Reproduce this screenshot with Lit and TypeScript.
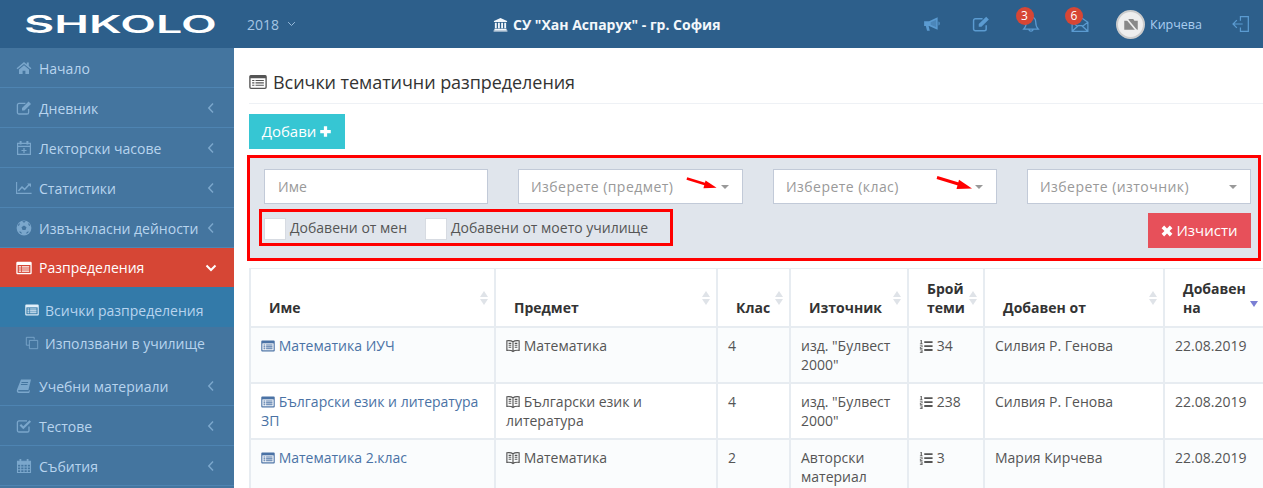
import { LitElement, html, css, svg } from "lit"
import { customElement } from "lit/decorators.js"

// inline icons, all on a 16x16 box, coloured through currentColor
const icons: Record<string, ReturnType<typeof svg>> = {
  home: svg`<path fill="currentColor" d="M8 2 .6 8.200l.9 1L8 3.900l6.500 5.300.9-1-2.600-2.200V2.600h-2v2z"/><path fill="currentColor" d="M3 9.400 8 5.300l5 4.100V14H9.400v-3.200H6.600V14H3z"/>`,
  edit: svg`<path fill="none" stroke="currentColor" stroke-width="1.300" d="M12.600 9v3.400a1.600 1.600 0 0 1-1.600 1.600H3a1.600 1.600 0 0 1-1.600-1.600V5A1.600 1.600 0 0 1 3 3.400h6.400"/><path fill="currentColor" d="M6 8 12.600 1.500l2.400 2.400L8.400 10.500 6 10.500z"/>`,
  calplus: svg`<path fill="none" stroke="currentColor" stroke-width="1.200" d="M1.600 3.400h12.800v11H1.600zM1.600 6.400h12.800M8 8v5M5.500 10.500h5"/><path fill="currentColor" d="M3.600 1h2v3.400h-2zM10.400 1h2v3.400h-2z"/>`,
  chart: svg`<path fill="none" stroke="currentColor" stroke-width="1.100" d="M.6 2v11.400h15"/><path fill="none" stroke="currentColor" stroke-width="1.500" d="M2.400 11 6 7l2.600 2.400 4.600-5"/><path fill="currentColor" d="M11.200 3.400H15v3.800z"/>`,
  ball: svg`<circle cx="8" cy="8" r="7.400" fill="currentColor"/><path fill="var(--cut,#44759f)" d="M8 5.400l2.500 1.800-1 2.900h-3l-1-2.900zM6.200 1.500 8 2.700l1.800-1.200-1.800-.5zM1.800 6.200l1.700-1.300.3-1.900-1.600 1.400zM14.200 6.200l-1.700-1.300-.3-1.900 1.600 1.400zM3 11.400l2 .4 1.100 1.900-2-.6zM13 11.400l-2 .4-1.100 1.900 2-.6z"/>`,
  listalt: svg`<rect x=".3" y="1.800" width="15.400" height="12.400" rx="1.200" fill="currentColor"/><path fill="var(--cut,#fff)" d="M1.600 5h12.800v7.900H1.600z"/><path fill="currentColor" d="M2.800 6.200h2.200v1.200H2.800zM2.800 8.400h2.200v1.200H2.800zM2.800 10.600h2.200v1.200H2.800zM5.800 6.200h7.400v1.200H5.800zM5.800 8.400h7.400v1.200H5.800zM5.800 10.600h7.400v1.200H5.800z"/>`,
  listline: svg`<rect x=".8" y="2.300" width="14.400" height="11.400" rx="1" fill="none" stroke="currentColor" stroke-width="1.200"/><path fill="currentColor" d="M.8 2.300h14.400v2.400H.8zM2.800 6.200h2v1h-2zM2.800 8.300h2v1h-2zM2.800 10.400h2v1h-2zM5.800 6.200h7.400v1H5.800zM5.800 8.300h7.400v1H5.800zM5.800 10.400h7.400v1H5.800z"/>`,
  book: svg`<path fill="currentColor" d="M5 1.500h10l-2.600 10.500H2.800c-.9 0-.9 1.500 0 1.500h9.800l.4-1.200 1 .3-.8 2.400H2.400C.8 15 .5 13.200 1 11.600z"/><path fill="var(--cut,#44759f)" d="M5.600 4h6.600l-.2.900H5.400zM5 6h6.600l-.2.900H4.800z"/>`,
  check: svg`<path fill="none" stroke="currentColor" stroke-width="1.300" d="M13 8.500v3.900a1.600 1.600 0 0 1-1.600 1.600H3a1.600 1.600 0 0 1-1.600-1.600V4.500A1.600 1.600 0 0 1 3 2.900h8"/><path fill="none" stroke="currentColor" stroke-width="2.200" d="m4.300 6.800 3 3L14.300 3"/>`,
  cal: svg`<path fill="none" stroke="currentColor" stroke-width="1.100" d="M1.500 3.200h13v11.300h-13zM1.500 6.300h13M1.500 9h13M1.500 11.800h13M4.700 6.300v8.200M8 6.300v8.200M11.300 6.300v8.200"/><path fill="currentColor" d="M3.500 1h1.800v3.400H3.500zM10.700 1h1.800v3.400h-1.800zM1.500 3.200h13v3h-13z"/>`,
  files: svg`<path fill="none" stroke="currentColor" stroke-width="1" d="M10.500 4V1.500h-9v9H5M5 5h9.500v9.500H5z"/>`,
  horn: svg`<path fill="currentColor" d="M1 5.500h4.400L13 2v11L5.400 9.800H5l1 4.200H3.600L2.500 9.800H1z"/><path fill="var(--cut,#2d5f8b)" d="M11.800 4.200 6.800 6.400v2.300l5 2.200z" opacity=".35"/><path fill="currentColor" d="M13.800 5.700c1.400.4 1.400 3.200 0 3.600z"/>`,
  bell: svg`<path fill="none" stroke="currentColor" stroke-width="1.100" d="M8 1.800c-2.800 0-4.200 2-4.200 4.400 0 3.400-.6 4.700-2.200 6.300h12.800c-1.600-1.600-2.200-2.900-2.200-6.300 0-2.400-1.400-4.400-4.200-4.400zM6.200 12.700c0 2.200 3.600 2.200 3.600 0"/>`,
  mail: svg`<path fill="none" stroke="currentColor" stroke-width="1.100" d="M1 6.500 8 1.500l7 5v8H1zM1 6.500l5 3.800M15 6.500l-5 3.800M1 14.500l5.400-5h3.200l5.400 5"/>`,
  exit: svg`<path fill="none" stroke="currentColor" stroke-width="1.100" d="M7.500 5V1.500h7v13h-7V11M1 8h8.500M4.300 4.600.9 8l3.400 3.400"/>`,
  bank: svg`<path fill="currentColor" d="M8 1 15 4.200v1H1v-1zM2 6h2v6H2zM5.300 6h2v6h-2zM8.700 6h2v6h-2zM12 6h2v6h-2zM1.500 12.500h13V14h-13zM.6 14.400h14.800v1.100H.6z"/>`,
  plus: svg`<path fill="currentColor" d="M6 1.500h4V6h4.500v4H10v4.500H6V10H1.500V6H6z"/>`,
  times: svg`<path fill="currentColor" d="M4.200 .8 8 4.600 11.800.8 15.200 4.200 11.400 8l3.800 3.800-3.400 3.400L8 11.400l-3.800 3.800L.8 11.800 4.600 8 .8 4.200z"/>`,
  listol: svg`<path fill="currentColor" d="M6 2.500h9.500v2.200H6zM6 7h9.500v2.200H6zM6 11.500h9.500v2.200H6zM2 1h1.200v4.200h1V6H1v-.8h1V2h-.8zM1 7h3v2.400H2v1h2v.8H1V8.800h2v-1H1zM1 12h3v4H1v-.8h2v-.8H1.600v-.7H3v-.9H1z"/>`,
  open: svg`<path fill="none" stroke="currentColor" stroke-width="1.300" d="M8 3.200C6.400 2 3.600 1.700 1 2v11c2.600-.3 5.400 0 7 1.200 1.600-1.200 4.400-1.500 7-1.200V2c-2.600-.3-5.400 0-7 1.200zM8 3.200v11M3 5h3M3 7.200h3M3 9.400h3M10 5h3M10 7.200h3M10 9.400h3"/>`,
  cam: svg`<path fill="currentColor" d="M2 5h3l1-1.500h4L11 5h3v8H2z"/><path stroke="#eee" stroke-width="1.500" d="M3 2l10 12"/>`,
}

function icon(name: string, cls = "") {
  return html`<svg class="ico ${cls}" viewBox="0 0 16 16">${icons[name]}</svg>`
}

const chevLeft = html`<svg class="chev" viewBox="0 0 8 12"><path d="M6 1.500 1.800 6 6 10.500" fill="none" stroke="currentColor" stroke-width="1.500"/></svg>`
const chevDown = html`<svg class="chev down" viewBox="0 0 12 8"><path d="M1.500 1.500 6 6l4.500-4.500" fill="none" stroke="currentColor" stroke-width="2"/></svg>`
const chevThin = html`<svg class="chev" viewBox="0 0 12 8"><path d="M1.500 1.500 6 6l4.500-4.500" fill="none" stroke="currentColor" stroke-width="1.200"/></svg>`

function redArrow(cls: string) {
  return html`<svg class="arrow ${cls}" viewBox="0 0 40 16"><path d="M1 1.500 24 8.500" stroke="#f00" stroke-width="3" fill="none"/><path d="M36 12.500 23 3.800 20.500 13z" fill="#f00"/></svg>`
}

const menuTop = [
  ["home", "Начало", false],
  ["edit", "Дневник", true],
  ["calplus", "Лекторски часове", true],
  ["chart", "Статистики", true],
  ["ball", "Извънкласни дейности", true],
] as const

const menuBottom = [
  ["book", "Учебни материали"],
  ["check", "Тестове"],
  ["cal", "Събития"],
] as const

const rows = [
  { name: "Математика ИУЧ", subject: "Математика", cls: "4", src: 'изд. "Булвест 2000"', topics: "34", by: "Силвия Р. Генова" },
  { name: "Български език и литература ЗП", subject: "Български език и литература", cls: "4", src: 'изд. "Булвест 2000"', topics: "238", by: "Силвия Р. Генова" },
  { name: "Математика 2.клас", subject: "Математика", cls: "2", src: "Авторски материал", topics: "3", by: "Мария Кирчева" },
]

const heads = ["Име", "Предмет", "Клас", "Източник", "Брой теми", "Добавен от", "Добавен на"]
const widths = [245, 222, 73, 118, 76, 180, 100]

@customElement("app-root")
export class AppRoot extends LitElement {
  static styles = css`
    :host {
      display: block;
      height: 488px;
      overflow: hidden;
      font-family: "Open Sans", sans-serif;
      font-size: 14px;
      line-height: 19px;
      color: #555;
      background: #fff;
    }
    .ico { width: 16px; height: 16px; display: inline-block; vertical-align: -3px; flex: none; }
    .top {
      height: 48px;
      background: #2d5f8b;
      display: flex;
      align-items: center;
      color: #a5c5e4;
    }
    .logo-box { width: 247px; flex: none; padding-left: 24px; box-sizing: border-box; }
    .logo {
      display: inline-block;
      font-family: "Inter", sans-serif;
      font-size: 22px;
      line-height: 22px;
      font-weight: 600;
      color: #fff;
      transform: scale(2.12, 1.08);
      transform-origin: left center;
    }
    .year { display: flex; align-items: center; gap: 8px; width: 51px; flex: none; }
    .year .chev { width: 9px; height: 6px; color: #a5c5e4; }
    .school { margin-left: 195px; font-weight: 700; color: #f3f7fb; display: flex; align-items: center; gap: 5px; }
    .school .ico { width: 15px; height: 15px; }
    .right { margin-left: auto; display: flex; align-items: center; padding-right: 13px; }
    .slot { width: 49.500px; display: flex; justify-content: center; position: relative; color: #5b9bd1; }
    .slot .ico { width: 18px; height: 18px; }
    .badge {
      position: absolute;
      left: 9.500px;
      top: -8px;
      width: 18px;
      height: 18px;
      border-radius: 50%;
      background: #d64635;
      color: #fff;
      font-size: 12px;
      font-weight: 400;
      line-height: 18px;
      text-align: center;
    }
    .avatar {
      width: 29px;
      height: 29px;
      border-radius: 50%;
      margin-left: 11px;
      background: #eee;
      border: 2px solid #ccc;
      box-sizing: border-box;
      color: #888;
      display: flex;
      align-items: center;
      justify-content: center;
    }
    .avatar .ico { width: 18px; height: 18px; }
    .user { margin-left: 5px; color: #a9cdf0; font-size: 12.500px; }
    .logout { margin-left: 30px; color: #5b9bd1; }
    .logout .ico { width: 18px; height: 18px; display: block; }

    .body { display: flex; }
    .side { width: 234px; flex: none; height: 440px; background: #44759f; color: #b8d4ee; }
    .item {
      height: 40px;
      box-sizing: border-box;
      border-bottom: 1px solid #4e84b2;
      display: flex;
      align-items: center;
      padding: 1px 19px 0 16px;
      gap: 7px;
      color: #b8d4ee;
      --cut: #44759f;
    }
    .item .ico { color: #7ba7cc; }
    .item span { flex: 1; }
    .chev { width: 8px; height: 12px; color: #7ba7cc; flex: none; }
    .item.open { height: 39px; padding-top: 0; background: #d64635; color: #fff; border-bottom: 0; --cut: #d64635; }
    .item.open .ico { color: #fff; }
    .item.open .chev.down { width: 12px; height: 8px; color: #fff; margin-right: -2px; }
    .sub { height: 79px; box-sizing: border-box; }
    .sub div { display: flex; align-items: center; gap: 6px; padding-left: 25px; color: #b8d4ee; }
    .sub .ico { width: 14px; height: 14px; vertical-align: 0; color: #7ba7cc; }
    .sub .on { height: 40px; padding-top: 6px; box-sizing: border-box; background: #337aa9; --cut: #fff; }
    .sub .on .ico { color: #e3f0fa; --cut: #337aa9; }
    .sub .off { height: 32px; }

    .main { flex: 1; min-width: 0; padding-left: 15px; }
    .title {
      height: 56px;
      box-sizing: border-box;
      padding-top: 13px;
      border-bottom: 1px solid #eef1f5;
      font-size: 18px;
      line-height: 24px;
      letter-spacing: -.06px;
      color: #333;
      display: flex;
      align-items: center;
      gap: 6px;
    }
    .title .ico { color: #555; width: 18px; height: 18px; }
    .add {
      margin-top: 10px;
      width: 96px;
      height: 35px;
      background: #36c6d3;
      color: #fff;
      font-size: 15px;
      display: flex;
      align-items: center;
      justify-content: center;
      gap: 3px;
    }
    .add .ico { width: 13px; height: 13px; }
    .filter {
      margin: 6px 0 0 -2px;
      width: 1014px;
      height: 106px;
      box-sizing: border-box;
      border: 3px solid #f00;
      background: #e0e5ec;
      padding: 11px 7px 10px 14px;
    }
    .fields { display: grid; grid-template-columns: 224px 225px 224px 224px; gap: 30px; }
    .field {
      height: 35px;
      box-sizing: border-box;
      background: #fff;
      border: 1px solid #c2cad8;
      color: #999;
      font-size: 14px;
      line-height: 33px;
      padding-left: 13px;
      position: relative;
    }
    .field.pick { padding-left: 12px; letter-spacing: .45px; }
    .caret {
      position: absolute;
      right: 13px;
      top: 15px;
      width: 0;
      height: 0;
      border-left: 4px solid transparent;
      border-right: 4px solid transparent;
      border-top: 4px solid #999;
    }
    .arrow { position: absolute; width: 40px; height: 16px; top: 6px; }
    .arrow.a1 { left: 167px; width: 34px; }
    .arrow.a2 { left: 162px; }
    .second { display: flex; align-items: flex-end; margin-top: 5px; height: 39px; }
    .checks {
      margin-left: -5px;
      height: 37px;
      box-sizing: border-box;
      border: 3px solid #f00;
      align-self: flex-start;
      display: flex;
      align-items: center;
      padding: 0 22px 0 2px;
      color: #555;
    }
    .box { width: 22px; height: 22px; box-sizing: border-box; background: #fff; border: 1px solid #d7dbe2; margin-right: 4px; position: relative; top: 1px; }
    .checks span + .box { margin-left: 18px; }
    .clear {
      margin-left: auto;
      width: 103px;
      height: 35px;
      background: #e7505a;
      color: #fff;
      display: flex;
      align-items: center;
      justify-content: center;
      gap: 3px;
      font-size: 15px;
    }
    .clear .ico { width: 12px; height: 12px; vertical-align: 0; }

    table {
      margin: 7px 0 0 0;
      table-layout: fixed;
      border-collapse: collapse;
      width: 1014px;
    }
    th, td { border: 2px solid #e7ecf1; vertical-align: top; box-sizing: border-box; text-align: left; }
    tr:first-child th { border-top-width: 1px; }
    th {
      height: 58px;
      vertical-align: bottom;
      padding: 8px 10px 9px 18px;
      color: #333;
      font-weight: 700;
      position: relative;
    }
    .sort { position: absolute; right: 6px; top: 22px; display: flex; flex-direction: column; gap: 2px; }
    .sort i { width: 0; height: 0; border-left: 4px solid transparent; border-right: 4px solid transparent; }
    .sort .u { border-bottom: 6px solid #dfe3e8; }
    .sort .d { border-top: 6px solid #dfe3e8; }
    .sort.active { top: 32px; right: 5px; }
    .sort.active .d { border-top-color: #7b7fd4; }
    td { padding: 8px 10px 8px; height: 56px; }
    tbody tr:nth-child(odd) td { background: #fafcfd; }
    td a { color: #4a72a5; }
    td .ico { width: 14px; height: 14px; vertical-align: -2px; }
    td a .ico { --cut: #fff; }
  `

  render() {
    return html`
      <div class="top">
        <div class="logo-box"><span class="logo">SHKOLO</span></div>
        <div class="year">2018 ${chevThin}</div>
        <div class="school">${icon("bank")}СУ "Хан Аспарух" - гр. София</div>
        <div class="right">
          <div class="slot">${icon("horn")}</div>
          <div class="slot">${icon("edit")}</div>
          <div class="slot">${icon("bell")}<b class="badge">3</b></div>
          <div class="slot">${icon("mail")}<b class="badge">6</b></div>
          <div class="avatar">${icon("cam")}</div>
          <div class="user">Кирчева</div>
          <div class="logout">${icon("exit")}</div>
        </div>
      </div>
      <div class="body">
        <nav class="side">
          ${menuTop.map(([ic, label, more]) => html`<div class="item">${icon(ic)}<span>${label}</span>${more ? chevLeft : ""}</div>`)}
          <div class="item open">${icon("listalt")}<span>Разпределения</span>${chevDown}</div>
          <div class="sub">
            <div class="on">${icon("listalt")}Всички разпределения</div>
            <div class="off">${icon("files")}Използвани в училище</div>
          </div>
          ${menuBottom.map(([ic, label]) => html`<div class="item">${icon(ic)}<span>${label}</span>${chevLeft}</div>`)}
        </nav>
        <main class="main">
          <div class="title">${icon("listline")}Всички тематични разпределения</div>
          <div class="add">Добави${icon("plus")}</div>
          <div class="filter">
            <div class="fields">
              <div class="field">Име</div>
              <div class="field pick">Изберете (предмет)<i class="caret"></i>${redArrow("a1")}</div>
              <div class="field pick">Изберете (клас)<i class="caret"></i>${redArrow("a2")}</div>
              <div class="field pick">Изберете (източник)<i class="caret"></i></div>
            </div>
            <div class="second">
              <div class="checks">
                <i class="box"></i><span>Добавени от мен</span>
                <i class="box"></i><span>Добавени от моето училище</span>
              </div>
              <div class="clear">${icon("times")}Изчисти</div>
            </div>
          </div>
          <table>
            <colgroup>${widths.map((w) => html`<col style="width:${w}px" />`)}</colgroup>
            <thead>
              <tr>
                ${heads.map(
                  (h, i) => html`<th>
                    ${h}
                    ${i === heads.length - 1
                      ? html`<div class="sort active"><i class="d"></i></div>`
                      : html`<div class="sort"><i class="u"></i><i class="d"></i></div>`}
                  </th>`,
                )}
              </tr>
            </thead>
            <tbody>
              ${rows.map(
                (r) => html`<tr>
                  <td><a>${icon("listalt")} ${r.name}</a></td>
                  <td>${icon("open")} ${r.subject}</td>
                  <td>${r.cls}</td>
                  <td>${r.src}</td>
                  <td>${icon("listol")} ${r.topics}</td>
                  <td>${r.by}</td>
                  <td>22.08.2019</td>
                </tr>`,
              )}
            </tbody>
          </table>
        </main>
      </div>
    `
  }
}
